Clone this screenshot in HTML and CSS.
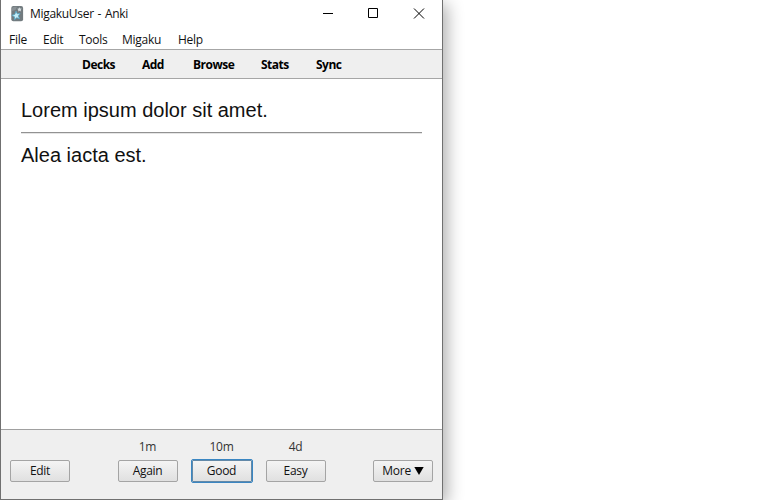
FILE: index.html
```
<!DOCTYPE html>
<html lang="en">
<head>
<meta charset="utf-8">
<title>MigakuUser - Anki</title>
<link rel="stylesheet" href="styles.css">
</head>
<body>
<main class="window">
  <header class="titlebar">
    <svg class="logo" width="14" height="17" viewBox="0 0 14 17">
      <rect x="1.3" y="1" width="11.8" height="15.2" rx="2" fill="#727b7f"/>
      <path d="M2 3.5Q2.3 1.5 5 1.7L7 1.8 5.5 5 2 6Z" fill="#899195"/>
      <path d="M9.3 2.2l.8 1.3 1.5.1-.9 1.3.4 1.5-1.5-.6-1.4.7.1-1.6-1-1.1 1.5-.3z" fill="#d5dde0"/>
      <path d="M6 6.2l1.2 2.5 2.9-.1-1.8 2.3 1.3 2.8-2.9-.9-2.3 2 .1-3-2.7-1.5 3-.9z" fill="#c4edf8" stroke="#53a5c4" stroke-width=".8"/>
    </svg>
    <h1 class="title">MigakuUser - Anki</h1>
    <div class="controls">
      <svg width="12" height="12" viewBox="0 0 12 12"><path d="M1 5.5h10"/></svg>
      <svg width="12" height="12" viewBox="0 0 12 12"><path d="M1.5 .5h9v9h-9z"/></svg>
      <svg width="12" height="12" viewBox="0 0 12 12"><path d="M1 .5l10 10M11 .5L1 10.5"/></svg>
    </div>
  </header>
  <nav class="menubar"><span>File</span><span>Edit</span><span>Tools</span><span>Migaku</span><span>Help</span></nav>
  <nav class="toolbar"><span>Decks</span><span>Add</span><span>Browse</span><span>Stats</span><span>Sync</span></nav>
  <section class="card">
    <p>Lorem ipsum dolor sit amet.</p>
    <hr>
    <p>Alea iacta est.</p>
  </section>
  <footer class="answers">
    <button>Edit</button>
    <div class="choices">
      <div class="choice"><span>1m</span><button>Again</button></div>
      <div class="choice"><span>10m</span><button class="focused">Good</button></div>
      <div class="choice"><span>4d</span><button>Easy</button></div>
    </div>
    <button class="more">More <svg width="10" height="8" viewBox="0 0 10 8"><path d="M.3 0h9.4L5 8z"/></svg></button>
  </footer>
</main>
</body>
</html>
```
FILE: styles.css
```
* { box-sizing: border-box; }
body {
  margin: 0;
  height: 500px;
  overflow: hidden;
  background: #fff;
  color: #111;
  font: 12px/16px "Open Sans", "Noto Sans", sans-serif;
}
.window {
  display: flex;
  flex-direction: column;
  width: 443px;
  height: 500px;
  border: solid #707070;
  border-width: 0 1px 1px;
  background: #fff;
  box-shadow: 4px 4px 16px rgba(0, 0, 0, .32);
}
.titlebar {
  display: flex;
  align-items: center;
  height: 30px;
  padding: 0 17px 3px 9px;
}
.logo { margin-right: 6px; }
.title {
  margin: 0;
  font-size: 12px;
  font-weight: 400;
  letter-spacing: -.3px;
  word-spacing: 1px;
  white-space: nowrap;
}
.controls {
  display: flex;
  gap: 33px;
  margin-left: auto;
}
.controls svg {
  fill: none;
  stroke: #000;
  stroke-width: 1;
}
.controls svg:not(:last-child) {
  margin-left: -1px;
  margin-right: 1px;
}
.menubar {
  display: grid;
  grid-template-columns: 34px 36px 43px 56px 30px;
  height: 19px;
  padding: 2px 0 0 8px;
  letter-spacing: -.25px;
}
.toolbar {
  display: grid;
  grid-template-columns: 60px 51px 68px 55px 30px;
  height: 30px;
  padding: 7px 0 0 81px;
  border: solid #a6a6a6;
  border-width: 1px 0;
  background: #efefef;
  color: #000;
  font-weight: 700;
  letter-spacing: -.5px;
}
.card {
  flex: 1;
  padding: 20px;
  font: 20px/23px "Liberation Sans", Arial, sans-serif;
}
.card p { margin: 0; }
.card hr {
  height: 2px;
  margin: 10px 0;
  border: 0;
  border-top: 1px solid #929292;
  border-bottom: 1px solid #e5e5e5;
}
.answers {
  display: flex;
  justify-content: space-between;
  align-items: flex-end;
  height: 70px;
  padding: 0 9px 17px;
  border-top: 1px solid #a0a0a0;
  background: #efefef;
  letter-spacing: -.3px;
}
.choices {
  display: flex;
  gap: 13px;
}
.choice {
  display: flex;
  flex-direction: column;
  align-items: center;
  gap: 5px;
  width: 61px;
  color: #333;
}
button {
  width: 60px;
  height: 22px;
  padding: 0;
  border: 1px solid #a4a4a4;
  border-radius: 2px;
  background: linear-gradient(#f4f4f4, #e0e0e0);
  color: #111;
  font: inherit;
  letter-spacing: inherit;
}
.focused {
  border-color: #6389a8;
  border-radius: 1px;
  outline: 1px solid #3a86c2;
}
.more { white-space: nowrap; }
.more svg { fill: #000; }
```
